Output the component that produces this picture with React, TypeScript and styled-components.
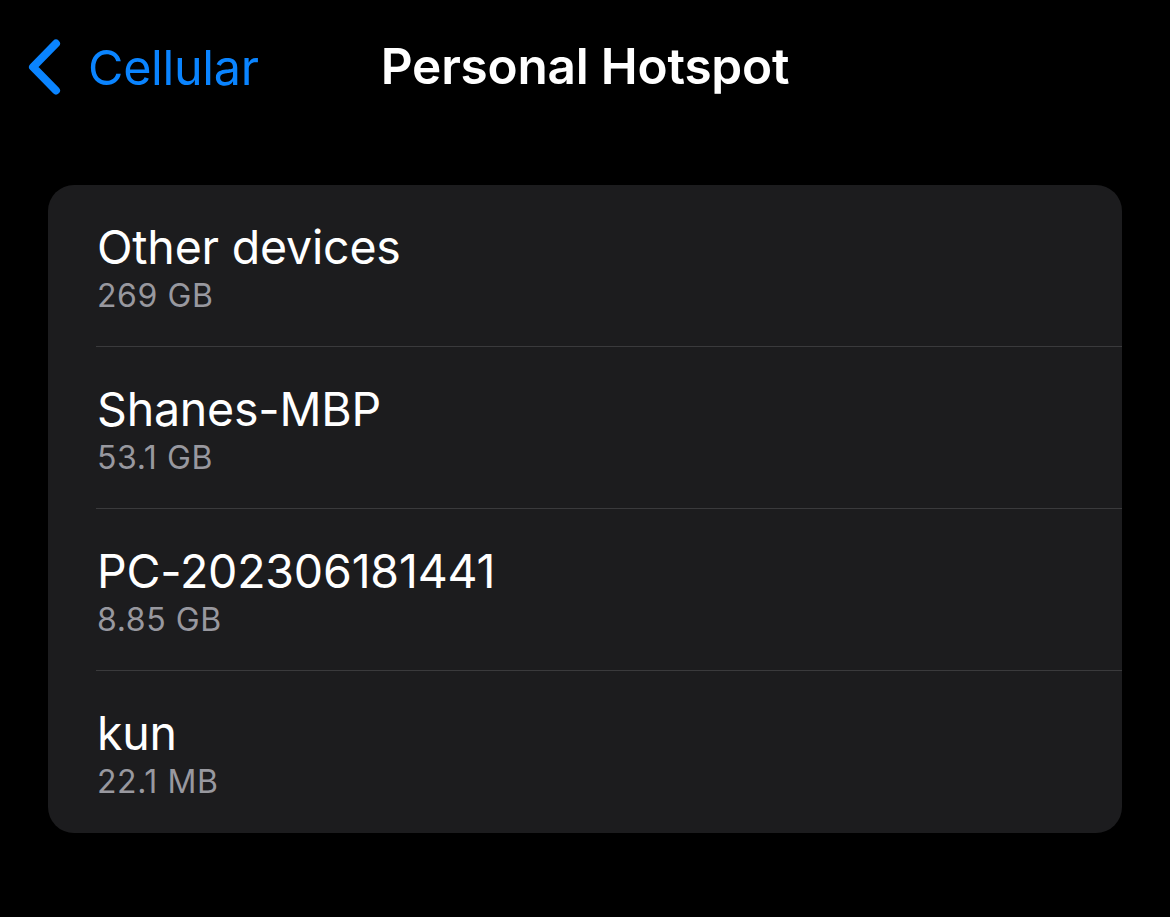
import React from "react";
import styled, { createGlobalStyle } from "styled-components";

const GlobalStyle = createGlobalStyle`
  html, body {
    margin: 0;
    padding: 0;
    background: #000;
  }
  body {
    font-family: Inter, "Noto Sans", "Liberation Sans", sans-serif;
    -webkit-font-smoothing: antialiased;
  }
`;

const devices = [
  { name: "Other devices", usage: "269 GB" },
  { name: "Shanes-MBP", usage: "53.1 GB" },
  { name: "PC-202306181441", usage: "8.85 GB" },
  { name: "kun", usage: "22.1 MB" },
];

const Screen = styled.div`
  width: 1170px;
  height: 917px;
  background: #000;
  color: #fff;
  display: flex;
  flex-direction: column;
`;

const NavBar = styled.div`
  position: relative;
  height: 135px;
  display: flex;
  align-items: flex-start;
  padding: 35px 0 0 27px;
  box-sizing: border-box;
`;

const BackButton = styled.div`
  display: flex;
  align-items: center;
  gap: 25px;
  color: #0a84ff;
  font-size: 48.5px;
  letter-spacing: -0.3px;
`;

const Title = styled.div`
  position: absolute;
  left: 0;
  right: 0;
  top: 36px;
  text-align: center;
  font-size: 49.5px;
  font-weight: 600;
  letter-spacing: -0.2px;
  pointer-events: none;
`;

const Card = styled.div`
  margin: 50px 48px 0;
  background: #1c1c1e;
  border-radius: 26px;
  overflow: hidden;
`;

const Row = styled.div`
  height: 162px;
  padding-left: 48px;
  box-sizing: border-box;
`;

const RowInner = styled.div<{ $last?: boolean }>`
  height: 100%;
  box-sizing: border-box;
  display: flex;
  flex-direction: column;
  justify-content: center;
  gap: 2px;
  padding: 4px 0 0 1px;
  border-bottom: ${(p) => (p.$last ? "none" : "1.5px solid #3a3a3c")};
`;

const Name = styled.div`
  font-size: 46.5px;
  line-height: 54px;
  letter-spacing: -0.2px;
  color: #fff;
`;

const Usage = styled.div`
  font-size: 32px;
  line-height: 40px;
  letter-spacing: 0.6px;
  color: #98989f;
`;

const Chevron = () => (
  <svg width="36" height="64" viewBox="0 0 36 64" fill="none">
    <path
      d="M29 8.5 L6 32 L29 55.5"
      stroke="#0a84ff"
      strokeWidth="8"
      strokeLinecap="round"
      strokeLinejoin="round"
    />
  </svg>
);

export default function App() {
  return (
    <Screen>
      <GlobalStyle />
      <NavBar>
        <BackButton>
          <Chevron />
          <span>Cellular</span>
        </BackButton>
        <Title>Personal Hotspot</Title>
      </NavBar>
      <Card>
        {devices.map((d, i) => (
          <Row key={d.name}>
            <RowInner $last={i === devices.length - 1}>
              <Name>{d.name}</Name>
              <Usage>{d.usage}</Usage>
            </RowInner>
          </Row>
        ))}
      </Card>
    </Screen>
  );
}
